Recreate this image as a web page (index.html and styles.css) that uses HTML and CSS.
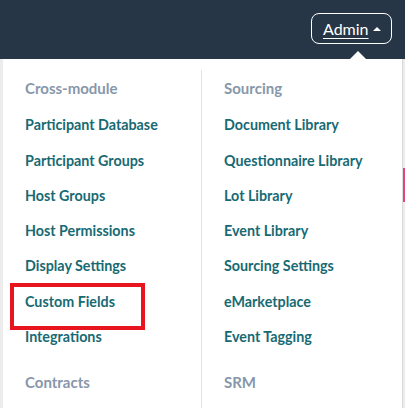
FILE: index.html
```html
<!DOCTYPE html>
<html>
<head>
<meta charset="utf-8">
<link rel="stylesheet" href="styles.css">
</head>
<body>
<div class="page">
  <header class="topbar">
    <button class="admin-btn"><span class="admin-label">Admin</span><span class="caret"></span></button>
  </header>
  <div class="bg-accent"></div>
  <div class="menu">
    <span class="pointer"></span>
    <div class="col col-left">
      <div class="section">
        <div class="heading">Cross-module</div>
        <a class="item">Participant Database</a>
        <a class="item">Participant Groups</a>
        <a class="item">Host Groups</a>
        <a class="item">Host Permissions</a>
        <a class="item">Display Settings</a>
        <a class="item highlighted">Custom Fields</a>
        <a class="item">Integrations</a>
      </div>
      <div class="section">
        <div class="heading">Contracts</div>
      </div>
    </div>
    <div class="col col-right">
      <div class="section">
        <div class="heading">Sourcing</div>
        <a class="item">Document Library</a>
        <a class="item">Questionnaire Library</a>
        <a class="item">Lot Library</a>
        <a class="item">Event Library</a>
        <a class="item">Sourcing Settings</a>
        <a class="item">eMarketplace</a>
        <a class="item">Event Tagging</a>
      </div>
      <div class="section">
        <div class="heading">SRM</div>
      </div>
    </div>
  </div>
</div>
</body>
</html>
```
FILE: styles.css
```css
* { box-sizing: border-box; }
html, body { margin: 0; padding: 0; }
body {
  background: #ececec;
  font-family: Lato, "Noto Sans", sans-serif;
  overflow: hidden;
}
.page {
  position: relative;
  width: 405px;
  height: 408px;
  overflow: hidden;
}
.topbar {
  height: 59px;
  background: #263646;
  display: flex;
  justify-content: flex-end;
  align-items: flex-start;
  padding: 13px 13px 0 0;
}
.admin-btn {
  width: 81px;
  height: 31px;
  border: 1.5px solid #ffffff;
  border-radius: 8px;
  background: transparent;
  color: #ffffff;
  font-family: Lato, "Noto Sans", sans-serif;
  font-size: 16px;
  font-weight: 400;
  display: flex;
  align-items: center;
  padding: 0 0 0 11px;
  gap: 4px;
}
.admin-label {
  text-decoration: underline;
  text-underline-offset: 3px;
  text-decoration-thickness: 1px;
}
.caret {
  width: 0;
  height: 0;
  border-left: 4px solid transparent;
  border-right: 4px solid transparent;
  border-bottom: 4px solid #ffffff;
  margin-top: 1px;
}
.bg-accent {
  position: absolute;
  right: 0;
  top: 168px;
  width: 2px;
  height: 34px;
  background: #e0457f;
}
.menu {
  position: relative;
  margin-left: 3px;
  width: 400px;
  height: 349px;
  background: #ffffff;
  border-right: 1px solid #dadada;
  display: flex;
  padding-top: 11px;
}
.pointer {
  position: absolute;
  top: -8px;
  left: 347px;
  width: 0;
  height: 0;
  border-left: 8px solid transparent;
  border-right: 8px solid transparent;
  border-bottom: 8px solid #ffffff;
}
.col {
  display: flex;
  flex-direction: column;
  padding-top: 1px;
}
.col-left {
  width: 199px;
  border-right: 1px solid #e3e3e3;
  padding-left: 22px;
}
.col-right {
  flex: 1;
  padding-left: 22px;
}
.section {
  display: flex;
  flex-direction: column;
  margin-bottom: 11px;
}
.heading {
  line-height: 35.3px;
  font-size: 15px;
  font-weight: 700;
  color: #8797ab;
  margin-bottom: 1px;
}
.item {
  position: relative;
  line-height: 35.3px;
  font-size: 14.3px;
  font-weight: 700;
  color: #176a73;
  white-space: nowrap;
}
.highlighted::after {
  content: "";
  position: absolute;
  left: -15px;
  top: -1px;
  width: 127px;
  height: 39px;
  border: 4px solid #e8141e;
}
```
